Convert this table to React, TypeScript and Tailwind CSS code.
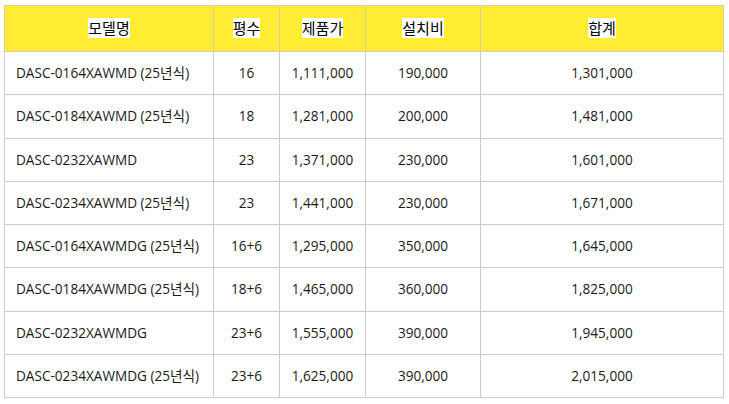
const rows = [
  ['DASC-0164XAWMD (25년식)', '16', '1,111,000', '190,000', '1,301,000'],
  ['DASC-0184XAWMD (25년식)', '18', '1,281,000', '200,000', '1,481,000'],
  ['DASC-0232XAWMD', '23', '1,371,000', '230,000', '1,601,000'],
  ['DASC-0234XAWMD (25년식)', '23', '1,441,000', '230,000', '1,671,000'],
  ['DASC-0164XAWMDG (25년식)', '16+6', '1,295,000', '350,000', '1,645,000'],
  ['DASC-0184XAWMDG (25년식)', '18+6', '1,465,000', '360,000', '1,825,000'],
  ['DASC-0232XAWMDG', '23+6', '1,555,000', '390,000', '1,945,000'],
  ['DASC-0234XAWMDG (25년식)', '23+6', '1,625,000', '390,000', '2,015,000'],
]

const headers = ['모델명', '평수', '제품가', '설치비', '합계']
const widths = ['w-[209px]', 'w-[66px]', 'w-[86px]', 'w-[115px]', 'w-[243px]']

export default function App() {
  return (
    <div className="bg-white w-[729px] h-[404px] pt-[5px] pl-[4px] text-[#1a1a1a]"
      style={{ fontFamily: '"Open Sans", "Noto Sans CJK KR", sans-serif' }}>
      <table className="border-collapse table-fixed w-[719px]">
        <thead>
          <tr className="bg-[#ffec33] h-[46px]">
            {headers.map((h, i) => (
              <th key={h} className={`${widths[i]} border border-[#d6d0a8] font-normal text-[15px] text-center`}>
                <span className="bg-white text-black">{h}</span>
              </th>
            ))}
          </tr>
        </thead>
        <tbody>
          {rows.map(r => (
            <tr key={r[0]} className="h-[43.3px] text-[13.6px]">
              <td className="border border-[#cccccc] pl-[11px] text-left">{r[0]}</td>
              <td className="border border-[#cccccc] text-center">{r[1]}</td>
              <td className="border border-[#cccccc] text-center">{r[2]}</td>
              <td className="border border-[#cccccc] text-center">{r[3]}</td>
              <td className="border border-[#cccccc] text-center">{r[4]}</td>
            </tr>
          ))}
        </tbody>
      </table>
    </div>
  )
}
